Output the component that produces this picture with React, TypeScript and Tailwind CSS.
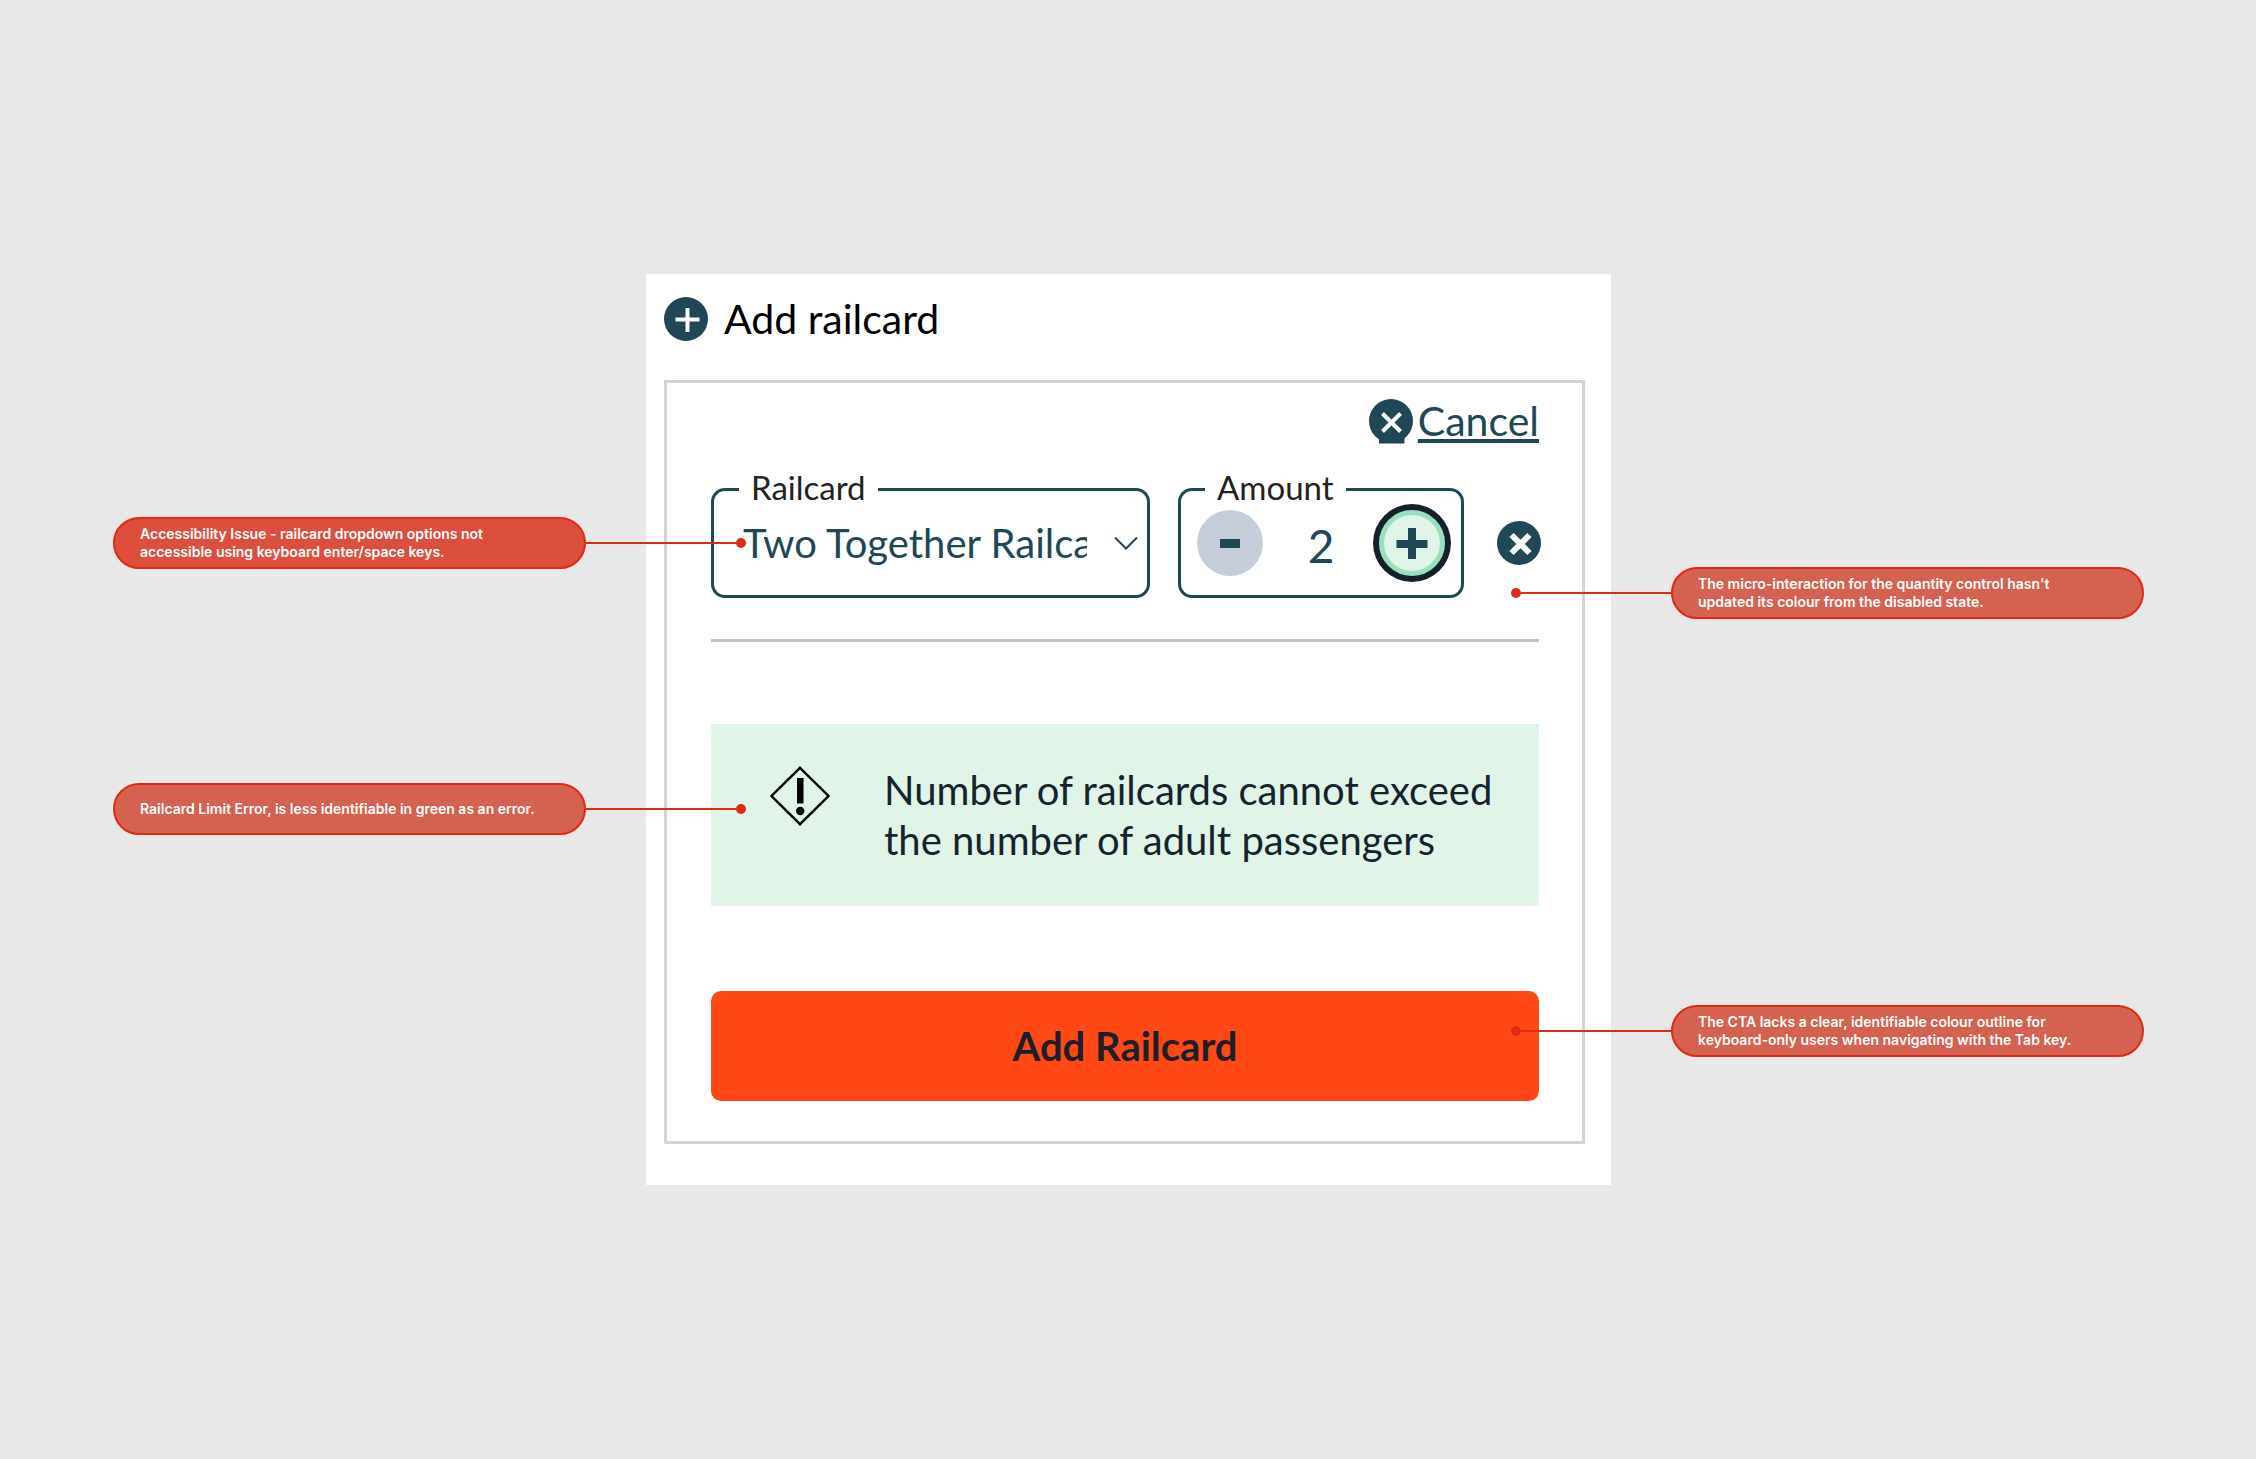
import { useState, type ReactNode } from "react";
import clsx from "clsx";

function Callout({
  side,
  strong = false,
  children,
}: {
  side: "left" | "right";
  strong?: boolean;
  children: ReactNode;
}) {
  return (
    <p
      className={clsx(
        "relative flex h-[52px] items-center rounded-full border-2 border-[#df2a14] pr-9 pl-[25px] font-['Inter',sans-serif] text-[14px] leading-[18px] font-semibold text-white",
        strong ? "bg-[#dc4f3c]" : "bg-[#d56150]",
      )}
    >
      <span>{children}</span>
      <span
        aria-hidden="true"
        className={clsx(
          "absolute top-1/2 z-10 flex w-[162px] -translate-y-1/2 items-center",
          side === "left" ? "left-full flex-row" : "right-full flex-row-reverse",
        )}
      >
        <span className="h-0.5 flex-1 bg-[#df2a14]" />
        <span className="size-[10px] rounded-full bg-[#df2a14]" />
      </span>
    </p>
  );
}

function AddIcon() {
  return (
    <svg viewBox="0 0 44 44" className="size-11" aria-hidden="true">
      <circle cx="22" cy="22" r="22" fill="#204756" />
      <path d="M23.500 11v24M11.500 22.500h24" stroke="#fff" strokeWidth="4" />
    </svg>
  );
}

function CancelIcon() {
  return (
    <svg viewBox="0 0 44 46" className="h-[46px] w-11" aria-hidden="true">
      <circle cx="22" cy="22" r="22" fill="#204756" />
      <path d="M10 38h25.500v6.500H10z" fill="#204756" />
      <path d="M13.500 14.500l18 18M31.500 14.500l-18 18" stroke="#fff" strokeWidth="4" />
    </svg>
  );
}

function RemoveIcon() {
  return (
    <svg viewBox="0 0 44 44" className="size-11" aria-hidden="true">
      <circle cx="22" cy="22" r="22" fill="#204756" />
      <path d="M14.500 14l18 18M32.500 14l-18 18" stroke="#fff" strokeWidth="6" />
    </svg>
  );
}

function WarningIcon() {
  return (
    <svg viewBox="0 0 60 60" className="mt-px size-[60px] shrink-0" aria-hidden="true">
      <path d="M30 1.800L58.500 30 30 58.200 1.500 30z" fill="none" stroke="#000" strokeWidth="2.400" />
      <path d="M27 12h6.500v25.500H27z" />
      <circle cx="30.200" cy="45" r="4.200" />
    </svg>
  );
}

export default function App() {
  const [amount, setAmount] = useState(2);

  return (
    <main className="flex min-h-screen items-center justify-center bg-[#e8e8e8] pr-28 pl-[113px] font-['Lato',sans-serif]">
      <div className="flex w-full justify-between">
        <aside className="flex w-[473px] shrink-0 flex-col gap-[214px] pt-[243px]">
          <Callout side="left" strong>
            Accessibility Issue - railcard dropdown options not accessible using keyboard enter/space keys.
          </Callout>
          <Callout side="left">Railcard Limit Error, is less identifiable in green as an error.</Callout>
        </aside>

        <section className="max-w-[965px] flex-1 bg-white pt-[23px] pr-[26px] pb-[41px] pl-[18px]">
          <h1 className="flex items-center gap-4 text-[41px] leading-[44px] text-black">
            <AddIcon />
            Add railcard
          </h1>

          <form
            className="mt-[39px] border-[3px] border-[#d3d3d3] pt-4 pr-[43px] pb-10 pl-11"
            onSubmit={(event) => event.preventDefault()}
          >
            <div className="flex justify-end">
              <button type="button" className="flex h-11 items-start gap-[5px] text-[41px] leading-[44px] text-[#204756]">
                <CancelIcon />
                <span className="underline decoration-[4px] underline-offset-[3px]">Cancel</span>
              </button>
            </div>

            <div className="-mr-0.5 mt-[26px] flex gap-7">
              <fieldset className="relative min-w-0 flex-1 rounded-[14px] border-[3px] border-[#204756] pt-px pb-[19px] pl-[25px]">
                <legend className="px-3 pb-1 text-[33px] leading-9 text-[#222]">
                  <label htmlFor="railcard">Railcard</label>
                </legend>
                <select
                  id="railcard"
                  className="h-[66px] w-full appearance-none bg-transparent pr-[60px] pl-1 text-[40px] leading-[50px] text-[#204756]"
                >
                  <option>Two Together Railcard</option>
                </select>
                <svg
                  viewBox="0 0 24 14"
                  className="pointer-events-none absolute top-[27px] right-[9px] h-[14px] w-6"
                  fill="none"
                  aria-hidden="true"
                >
                  <path d="M1 1.500l11 11 11-11" stroke="#204756" strokeWidth="2" />
                </svg>
              </fieldset>

              <fieldset className="w-[286px] rounded-[14px] border-[3px] border-[#204756] px-4 pt-px pb-[19px]">
                <legend className="ml-2 px-3 pb-1 text-[33px] leading-9 text-[#222]">Amount</legend>
                <div className="flex items-center justify-between">
                  <button
                    type="button"
                    aria-label="Decrease amount"
                    className="flex size-[66px] items-center justify-center rounded-full bg-[#c5ced8]"
                    onClick={() => setAmount(Math.max(0, amount - 1))}
                  >
                    <span className="h-[9px] w-5 bg-[#204756]" />
                  </button>
                  <output className="pt-1.5 text-[46px] leading-[60px] text-[#204756]">{amount}</output>
                  <button
                    type="button"
                    aria-label="Increase amount"
                    className="flex size-[66px] items-center justify-center rounded-full border-[5px] border-[#98e0be] bg-[#e0f4e8] ring-[6px] ring-[#14202c]"
                    onClick={() => setAmount(amount + 1)}
                  >
                    <svg viewBox="0 0 32 32" className="size-8" aria-hidden="true">
                      <path d="M16 1v31M.5 17h31" stroke="#204756" strokeWidth="8" />
                    </svg>
                  </button>
                </div>
              </fieldset>

              <button type="button" aria-label="Remove railcard" className="ml-[5px] pt-[18px]">
                <RemoveIcon />
              </button>
            </div>

            <hr className="mt-[41px] border-t-[3px] border-[#c4c4c4]" />

            <div role="alert" className="mt-[82px] flex items-start bg-[#e1f4e8] py-[41px] pr-10 pl-[59px]">
              <WarningIcon />
              <p className="ml-[54px] text-[40px] leading-[50px] text-[#14232d]">
                Number of railcards cannot exceed the number of adult passengers
              </p>
            </div>

            <button
              type="submit"
              className="mt-[85px] h-[110px] w-full rounded-[10px] bg-[#ff4815] text-[40px] leading-[50px] font-bold text-[#1c1f28]"
            >
              Add Railcard
            </button>
          </form>
        </section>

        <aside className="flex w-[473px] shrink-0 flex-col gap-[386px] pt-[293px]">
          <Callout side="right">
            The micro-interaction for the quantity control hasn't updated its colour from the disabled state.
          </Callout>
          <Callout side="right">
            The CTA lacks a clear, identifiable colour outline for keyboard-only users when navigating with the Tab key.
          </Callout>
        </aside>
      </div>
    </main>
  );
}
